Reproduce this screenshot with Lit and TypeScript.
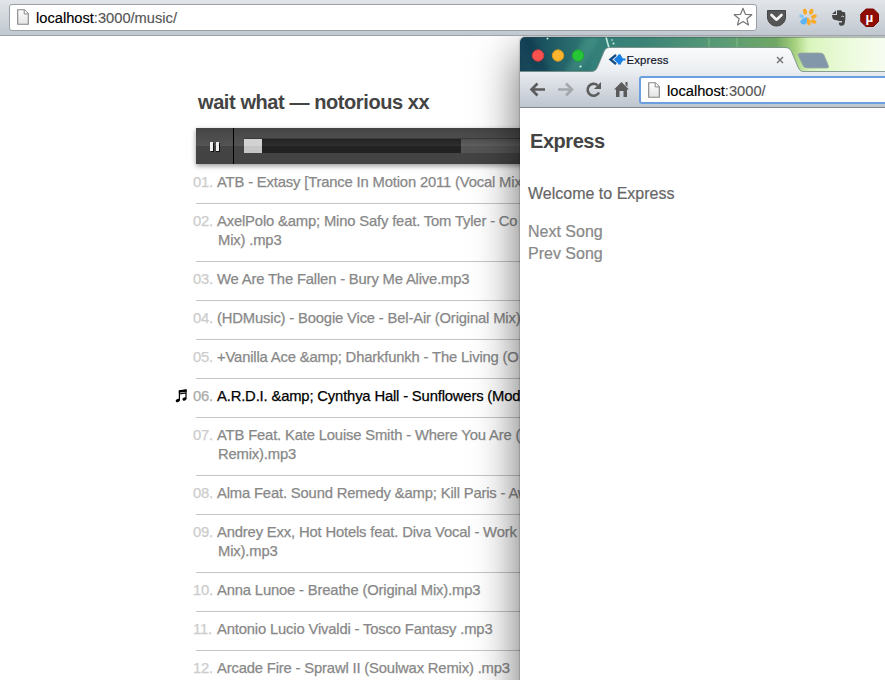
import { LitElement, html, css, svg, nothing } from "lit";
import { customElement, property } from "lit/decorators.js";

interface Track {
  title: string;
  rest?: string;
}

const TRACKS: Track[] = [
  { title: "ATB - Extasy [Trance In Motion 2011 (Vocal Mix)" },
  { title: "AxelPolo &amp; Mino Safy feat. Tom Tyler - Co", rest: "Mix) .mp3" },
  { title: "We Are The Fallen - Bury Me Alive.mp3" },
  { title: "(HDMusic) - Boogie Vice - Bel-Air (Original Mix)" },
  { title: "+Vanilla Ace &amp; Dharkfunkh - The Living (O" },
  { title: "A.R.D.I. &amp; Cynthya Hall - Sunflowers (Mod" },
  { title: "ATB Feat. Kate Louise Smith - Where You Are (", rest: "Remix).mp3" },
  { title: "Alma Feat. Sound Remedy &amp; Kill Paris - Aw" },
  { title: "Andrey Exx, Hot Hotels feat. Diva Vocal - Work", rest: "Mix).mp3" },
  { title: "Anna Lunoe - Breathe (Original Mix).mp3" },
  { title: "Antonio Lucio Vivaldi - Tosco Fantasy .mp3" },
  { title: "Arcade Fire - Sprawl II (Soulwax Remix) .mp3" },
];

const pageIcon = html`<svg width="12" height="16" viewBox="0 0 12 16">
  <defs><linearGradient id="pg" x2="0" y2="1"><stop stop-color="#fff" /><stop offset="1" stop-color="#e4e4e4" /></linearGradient></defs>
  <path d="M.7 .7H7.3L11.3 4.7V15.3H.7Z" fill="url(#pg)" stroke="#858585" stroke-width="1.1" />
  <path d="M7.2 .8V4.9H11.2" fill="#fff" stroke="#858585" />
</svg>`;

@customElement("address-field")
export class AddressField extends LitElement {
  @property() host = "";
  @property() path = "";
  static styles = css`
    :host { display: flex; align-items: center; box-sizing: border-box; background: #fff;
      font: 14.67px/20px "Liberation Sans", Arial, sans-serif; color: #000; }
    svg { margin: 0 7px 0 7px; flex: none; }
    .host, .path { -webkit-text-stroke: 0.15px; position: relative; top: 1px; }
    .path { color: #555; }
    .grow { flex: 1; }
  `;
  render() {
    return html`${pageIcon}<span class="host">${this.host}</span><span class="path">${this.path}</span><span class="grow"></span><slot></slot>`;
  }
}

@customElement("track-list")
export class TrackList extends LitElement {
  @property({ type: Number }) current = 6;
  static styles = css`
    :host { display: block; font: 14.8px/19px "Liberation Sans", Arial, sans-serif; letter-spacing: -0.165px; color: #888; }
    .row { display: flex; position: relative; padding: 8px 0 11px; border-bottom: 1px solid #c5c5c5; white-space: nowrap; }
    .num { width: 24px; margin-left: -3px; flex: none; color: #ccc; letter-spacing: -0.25px; }
    .title { flex: 1; }
    .rest { display: block; padding-left: 1px; }
    .on .title { color: #000; }
    .on .num { color: #aaa; }
    .note { position: absolute; left: -21px; top: 10px; }
    .num, .title { -webkit-text-stroke: 0.25px; }
  `;
  render() {
    return TRACKS.map((t, i) => {
      const on = i + 1 === this.current;
      return html`<div class="row ${on ? "on" : ""}">
        ${on
          ? html`<svg class="note" width="13" height="14" viewBox="0 0 13 14">
              <path d="M4 1.900L11 1V9.600M4.400 2V11.300M4.400 5L11 3.900" fill="none" stroke="#000" stroke-width="1.200" />
              <path d="M3.800 1.500L11.600 .6V2.800L3.800 3.800Z" />
              <ellipse cx="2.800" cy="11.500" rx="2.200" ry="1.500" transform="rotate(-20 2.800 11.500)" />
              <ellipse cx="9.500" cy="10" rx="2.100" ry="1.500" transform="rotate(-20 9.500 10)" />
            </svg>`
          : nothing}
        <span class="num">${String(i + 1).padStart(2, "0")}.</span>
        <span class="title"><span>${t.title}</span>${t.rest ? html`<span class="rest">${t.rest}</span>` : nothing}</span>
      </div>`;
    });
  }
}

@customElement("browser-window")
export class BrowserWindow extends LitElement {
  static styles = css`
    :host { display: flex; flex-direction: column; background: #fff; border-radius: 5px 0 0 0;
      font-family: "Liberation Sans", Arial, sans-serif; }
    .strip { height: 35px; border-radius: 5px 0 0 0; overflow: hidden; flex: none; }
    .strip svg { display: block; }
    .bar { height: 36px; flex: none; box-sizing: border-box; display: flex; align-items: center;
      background: linear-gradient(#e9ecf0, #bec5cf); border-bottom: 1px solid #808790; }
    .nav { display: flex; width: 120px; flex: none; }
    address-field { flex: 1; height: 28px; border: 2px solid #6c9fe0; border-right: 0; border-radius: 3px 0 0 3px; margin-left: -1px; }
    .page { padding: 21px 8px; }
    h1 { font-size: 20px; line-height: 24px; margin: 0 0 0 2px; color: #444; letter-spacing: -0.45px; }
    p { font-size: 16px; line-height: 22px; margin: 30px 0 16px; color: #666; }
    a { display: block; font-size: 16px; line-height: 22px; color: #888; }
    p, a { -webkit-text-stroke: 0.2px; }
  `;
  private light(x: number, fill: string, edge: string) {
    return svg`<circle cx=${x} cy="18.5" r="5.7" fill=${fill} stroke=${edge} />`;
  }
  render() {
    return html`
      <div class="strip">
        <svg width="366" height="35" viewBox="0 0 366 35">
          <defs>
            <linearGradient id="sky"><stop stop-color="#174257" /><stop offset=".07" stop-color="#1c5561" /><stop offset=".2" stop-color="#337f79" /><stop offset=".34" stop-color="#3b8377" /><stop offset=".55" stop-color="#5a9b76" /><stop offset=".7" stop-color="#71a765" /><stop offset=".75" stop-color="#a5d07d" /><stop offset=".79" stop-color="#d9f5bd" /><stop offset=".9" stop-color="#ecfbdc" /><stop offset="1" stop-color="#f7fcf1" /></linearGradient>
            <linearGradient id="tab" x2="0" y2="1"><stop stop-color="#fafbfc" /><stop offset="1" stop-color="#e9ecf0" /></linearGradient>
            <filter id="soft"><feGaussianBlur stdDeviation="2" /></filter>
            <filter id="edge"><feGaussianBlur stdDeviation=".6" /></filter>
          </defs>
          <rect width="366" height="35" fill="url(#sky)" />
          <path d="M12 0L30 35H14L2 0Z" fill="#0e354c" opacity=".45" filter="url(#soft)" />
          <path d="M45 35L65 0H80L60 35Z" fill="#5aab98" opacity=".3" filter="url(#soft)" />
          <path d="M86 0L89 11" stroke="#d8fff0" stroke-width="1.6" opacity=".85" />
          <path d="M189 0V11M217 0V11" stroke="#a9d39a" opacity=".5" />
          <g fill="#c8f7e4"><circle cx="27.500" cy="1.500" r="1" /><circle cx="60.500" cy="29.500" r="1.100" /><circle cx="93.500" cy="6.500" r="1" /><circle cx="92" cy="3" r=".8" /></g>
          <path d="M0 .5H366" stroke="#2b4750" opacity=".35" />
          <path d="M0 34.500H71C75 34.500 76 33 77.500 30L84 14.500C85.300 11.500 87 10.500 90 10.500H265C268 10.500 270 11.500 271.500 14.500L278 30C279.500 33.500 281 34.500 284 34.500H366V36H0Z" fill="url(#tab)" stroke="#708981" stroke-opacity=".8" />
          ${this.light(18, "#fb5250", "#d83c3d")}${this.light(38, "#fdb52e", "#d99722")}${this.light(58, "#27c637", "#1da82d")}
          <path d="M96 17.800L90.500 22.500L96 27.200" fill="none" stroke="#154b83" stroke-width="2.400" />
          <path d="M93.800 22.500L98 18.500V17.500H101V18.500L103 21.500H105.500V23.500H103L101 26.500V27.500H98V26.500Z" fill="#1680e4" />
          <text x="106.500" y="27" font-size="11.400" fill="#10152a" stroke="#10152a" stroke-width=".2" textLength="42">Express</text>
          <path d="M257 20L263 26M263 20L257 26" stroke="#777" stroke-width="1.500" />
          <path d="M281 16H300Q303 16 304 18L308.500 29Q309 31 307 31H287Q284 31 283 28.500L278 18Q277.500 16 281 16Z" fill="#8297a9" stroke="#9aab9f" stroke-width=".8" filter="url(#edge)" />
        </svg>
      </div>
      <div class="bar">
        <svg class="nav" width="120" height="35" viewBox="0 0 120 35" fill="none" stroke="#5b5b5b" stroke-width="2.600">
          <path d="M25 17.500H12M17.500 11.500L11.500 17.500L17.500 23.500" />
          <path d="M38 17.500H51M46 11.500L52 17.500L46 23.500" stroke="#a4a8ad" />
          <path d="M79 20.500A6 6 0 1 1 77.500 13.200" /><path d="M81 10V17H74Z" fill="#5b5b5b" stroke="none" />
          <path d="M101.500 10L109 17.500H107V25H103.500V19H99.500V25H96V17.500H94ZM105.500 10H107.500V15L105.500 13Z" fill="#5b5b5b" stroke="none" />
        </svg>
        <address-field host="localhost" path=":3000/"></address-field>
      </div>
      <div class="page">
        <h1>Express</h1>
        <p>Welcome to Express</p>
        <a>Next Song</a>
        <a>Prev Song</a>
      </div>`;
  }
}

@customElement("app-root")
export class AppRoot extends LitElement {
  static styles = css`
    :host { display: block; position: relative; width: 885px; height: 680px; overflow: hidden; background: #fff;
      font-family: "Liberation Sans", Arial, sans-serif; }
    .toolbar { display: flex; align-items: center; box-sizing: border-box; height: 36px; padding: 0 0 1px 9px;
      background: linear-gradient(#e2e6ea, #c0c7cf); border-bottom: 1px solid #9da3aa; }
    .toolbar address-field { width: 748px; height: 27px; border: 1px solid #9ba0a7; border-radius: 3px; flex: none; }
    .star { margin-right: 3px; }
    .player { margin: 54px 0 0 196px; width: 500px; }
    h1 { margin: 0 0 0 2px; font-size: 20px; line-height: 24px; letter-spacing: -0.41px; color: #444; white-space: nowrap; }
    .audio { margin: 14px 0 1px; height: 36px; display: flex; box-shadow: 0 2px 5px rgba(0,0,0,.4);
      background: linear-gradient(#444, #545454 50%, #444 50%, #434343); }
    .pause { width: 37px; border-right: 1px solid #000; display: flex; align-items: center; justify-content: center; }
    .scrub { flex: 1; margin: 11px 14px 11px 10px; display: flex; background: linear-gradient(#4f4f4f, #606060 50%, #555 50%); box-shadow: 0 -1px #3a3a3a; }
    .played { width: 18px; background: linear-gradient(#d2d2d2 50%, #c6c6c6 50%); }
    .loaded { width: 199px; background: linear-gradient(#222, #303030 50%, #222 50%); }
    .front { position: absolute; left: 520px; top: 37px; width: 366px; height: 643px; }
    .desk { position: absolute; left: 0; top: 36px; right: 0; bottom: 0; overflow: hidden; }
    .shade { position: absolute; left: 520px; top: 1px; width: 500px; height: 900px; border-radius: 5px;
      box-shadow: 0 16px 46px rgba(0,0,0,.6), 0 0 2px rgba(0,0,0,.5); }
  `;
  render() {
    return html`
      <div class="toolbar">
        <address-field host="localhost" path=":3000/music/">
          <svg class="star" width="20" height="20" viewBox="0 0 20 20"><path d="M10 1.300L12.400 7.300L18.800 7.700L13.900 11.800L15.500 18L10 14.500L4.500 18L6.100 11.800L1.200 7.700L7.600 7.300Z" fill="#fff" stroke="#777" stroke-width="1.200" stroke-linejoin="round" /></svg>
        </address-field>
        <svg width="128" height="34" viewBox="757 0 128 34">
          <path d="M767.500 10.500H785.500V17C785.500 22 781.500 26 776.500 26S767.500 22 767.500 17Z" fill="#555" stroke="#444" />
          <path d="M771.500 15L776.500 19.700L781.500 15" fill="none" stroke="#f3f3f3" stroke-width="2.700" stroke-linecap="round" stroke-linejoin="round" />
          <g fill="#fbab2a">
            <ellipse cx="805" cy="11.700" rx="2" ry="3.100" transform="rotate(-12 805 11.700)" />
            <ellipse cx="811.200" cy="11.700" rx="2" ry="3.100" transform="rotate(22 811.200 11.700)" />
            <ellipse cx="814" cy="16.500" rx="3" ry="1.900" transform="rotate(-25 814 16.500)" />
            <ellipse cx="813.500" cy="21.500" rx="3" ry="2" transform="rotate(25 813.500 21.500)" />
            <path d="M807 17.500C809.500 18 811 21 810.500 24C810 26 807.500 25.500 807 23.500Z" />
          </g>
          <ellipse cx="801.600" cy="16.200" rx="2.500" ry="1.900" transform="rotate(25 801.600 16.200)" fill="#8ac8f4" />
          <path d="M800.300 21.500C801 19.500 804.500 17 807 17.500V22C806 25.500 800.500 25.500 800.300 21.500Z" fill="#5db4f4" />
          <path d="M832 14L836 10.500V14ZM837 10.300H841L842.500 12H844.500C846 13 845.500 20 844.500 24Q844 26 841 25.700Q838.500 25.500 839 22.500H842V21H839.500L837.500 20.500L833.500 19.500Q832 18 832 15H837Z" fill="#454545" />
          <path d="M841.300 16.500Q843 15.500 844 17" fill="none" stroke="#c9ced4" />
          <path d="M866 9H873.500L878.500 14V21.500L873.500 26.500H866L860.800 21.500V14Z" fill="#900d04" stroke="#760800" />
          <text x="865.500" y="21.500" font-size="13.500" font-weight="700" fill="#fff" font-family="Liberation Sans, sans-serif">µ</text>
        </svg>
      </div>
      <main class="player">
        <h1>wait what — notorious xx</h1>
        <div class="audio">
          <div class="pause"><svg width="11" height="11" viewBox="0 0 11 11"><path d="M2 2H5V11H2ZM7 2H11V11H7Z" fill="#111" /><path d="M1 1H4V10H1ZM7 1H10V10H7Z" fill="#eee" /></svg></div>
          <div class="scrub"><div class="played"></div><div class="loaded"></div></div>
        </div>
        <track-list current="6"></track-list>
      </main>
      <div class="desk"><div class="shade"></div></div>
      <browser-window class="front"></browser-window>`;
  }
}
